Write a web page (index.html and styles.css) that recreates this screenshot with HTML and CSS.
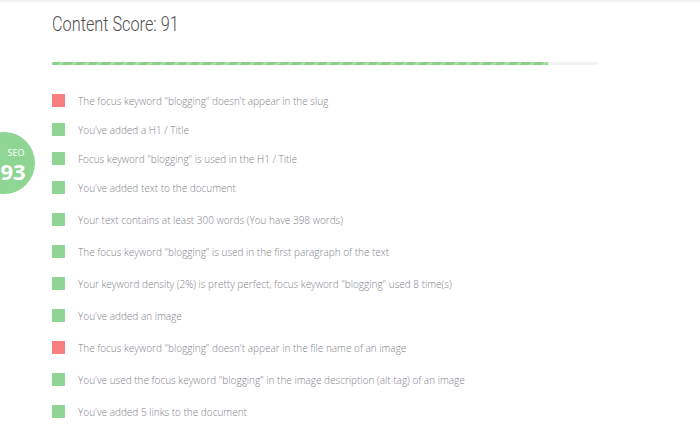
FILE: index.html
```html
<!DOCTYPE html>
<html>
<head>
<meta charset="utf-8">
<link rel="stylesheet" href="styles.css">
</head>
<body>
<div class="page">
  <div class="badge"><span class="badge-label">SEO</span><span class="badge-num">93</span></div>
  <main class="content">
    <h1 class="title">Content Score: 91</h1>
    <div class="progress"><div class="progress-fill" style="width: 90.9%"></div></div>
    <ul class="checks">
      <li class="check bad"><span class="mark"></span>The focus keyword "blogging" doesn't appear in the slug</li>
      <li class="check good"><span class="mark"></span>You've added a H1 / Title</li>
      <li class="check good"><span class="mark"></span>Focus keyword "blogging" is used in the H1 / Title</li>
      <li class="check good"><span class="mark"></span>You've added text to the document</li>
      <li class="check good"><span class="mark"></span>Your text contains at least 300 words (You have 398 words)</li>
      <li class="check good"><span class="mark"></span>The focus keyword "blogging" is used in the first paragraph of the text</li>
      <li class="check good"><span class="mark"></span>Your keyword density (2%) is pretty perfect, focus keyword "blogging" used 8 time(s)</li>
      <li class="check good"><span class="mark"></span>You've added an image</li>
      <li class="check bad"><span class="mark"></span>The focus keyword "blogging" doesn't appear in the file name of an image</li>
      <li class="check good"><span class="mark"></span>You've used the focus keyword "blogging" in the image description (alt tag) of an image</li>
      <li class="check good"><span class="mark"></span>You've added 5 links to the document</li>
    </ul>
  </main>
</div>
</body>
</html>
```
FILE: styles.css
```css
html, body {
  margin: 0;
  padding: 0;
  background: #fff;
}
body {
  font-family: "Open Sans", "Liberation Sans", sans-serif;
  width: 700px;
  height: 442px;
  overflow: hidden;
}
.page {
  position: relative;
  border-top: 2px solid #f4f4f4;
  height: 440px;
}
.content {
  padding-left: 52px;
  width: 546px;
}
.title {
  display: inline-block;
  margin: 0;
  padding-top: 9px;
  font-family: "Roboto", sans-serif;
  font-weight: 300;
  font-size: 21px;
  line-height: 26px;
  color: #4f4f4f;
  transform: scaleX(0.775);
  transform-origin: left center;
}
.progress {
  margin-top: 25px;
  height: 3px;
  background: #f3f3f3;
  border-radius: 2px;
  overflow: hidden;
}
.progress-fill {
  height: 100%;
  background: repeating-linear-gradient(135deg, #86d28a 0 6px, #a6e0a8 6px 9px);
}
.checks {
  list-style: none;
  margin: 29px 0 0;
  padding: 0;
}
.check {
  display: flex;
  align-items: center;
  height: 13px;
  margin-bottom: 19px;
  font-size: 10px;
  font-weight: 300;
  color: #7f848c;
  white-space: nowrap;
}
.check:nth-child(-n+3) {
  margin-bottom: 16px;
}
.mark {
  width: 13px;
  height: 13px;
  flex: none;
  margin-right: 13px;
}
.good .mark { background: #8fd694; }
.bad .mark { background: #f87f7f; }
.badge {
  position: absolute;
  left: -27px;
  top: 130px;
  width: 62px;
  height: 62px;
  border-radius: 50%;
  background: #8fd694;
  color: #fff;
  display: flex;
  flex-direction: column;
  align-items: center;
  justify-content: center;
  padding-left: 18px;
  padding-top: 3px;
  box-sizing: border-box;
}
.badge-label {
  font-size: 9px;
  line-height: 11px;
  margin-left: 6px;
  margin-bottom: 2px;
}
.badge-num {
  font-size: 22px;
  font-weight: 700;
  line-height: 22px;
}
```
